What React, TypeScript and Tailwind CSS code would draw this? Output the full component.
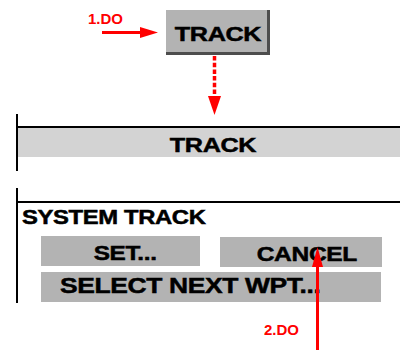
const Label = ({ text, className = '' }: { text: string; className?: string }) => (
  <span
    className={`inline-block text-[21px] leading-none font-bold tracking-[-0.3px] text-black [-webkit-text-stroke:0.5px_black] ${className}`}
  >
    {text}
  </span>
);

const App = () => {
  return (
    <div className="relative h-[350px] w-[400px] overflow-hidden bg-white font-['Liberation_Sans',Arial,sans-serif]">
      {/* top soft key */}
      <div className="pt-[10px] pl-[166px]">
        <div className="flex h-[45px] w-[104px] justify-center border-r-[3px] border-b-[3px] border-[#4d4d4d] bg-[#b3b3b3] pt-[13px] pl-[2px]">
          <Label text="TRACK" className="origin-center scale-x-[1.2]" />
        </div>
      </div>

      {/* page title panel */}
      <div className="mt-[59px] ml-[16px] h-[57px] border-l-2 border-black pt-[12px]">
        <div className="border-t-2 border-black">
          <div className="flex h-[29px] justify-center bg-[#d3d3d3] pt-[6px] pl-[7px]">
            <Label text="TRACK" className="origin-center scale-x-[1.2]" />
          </div>
        </div>
      </div>

      {/* system track panel */}
      <div className="mt-[17px] ml-[16px] h-[115px] border-l-2 border-black pt-[13px]">
        <div className="border-t-2 border-black pt-[4px]">
          <div className="pl-[4px]">
            <span className="inline-block origin-left scale-x-[1.19] text-[20px] leading-none font-bold tracking-[-0.3px] text-black [-webkit-text-stroke:0.5px_black]">
              SYSTEM TRACK
            </span>
          </div>
          <div className="mt-[5px] flex items-start gap-[20px] pl-[23px]">
            <div className="flex h-[30px] w-[159px] justify-center bg-[#b3b3b3] pt-[6px] pl-[10px]">
              <Label text="SET..." className="origin-center scale-x-[1.16]" />
            </div>
            <div className="mt-[1px] flex h-[30px] w-[162px] justify-center bg-[#b3b3b3] pt-[6px] pl-[12px]">
              <Label text="CANCEL" className="origin-center scale-x-[1.17]" />
            </div>
          </div>
          <div className="mt-[5px] ml-[23px] h-[30px] w-[340px] bg-[#b3b3b3] pt-[3px] pl-[19px]">
            <Label text="SELECT NEXT WPT..." className="origin-left scale-x-[1.2] text-[22px]" />
          </div>
        </div>
      </div>

      {/* red annotations */}
      <span className="absolute top-[12px] left-[88px] origin-left scale-x-[1.07] text-[14px] leading-none font-bold text-[#ff0000]">
        1.DO
      </span>
      <span className="absolute top-[323px] left-[264px] origin-left scale-x-[1.07] text-[14px] leading-none font-bold text-[#ff0000]">
        2.DO
      </span>
      <svg className="pointer-events-none absolute top-0 left-0" width="400" height="350" viewBox="0 0 400 350">
        <line x1="102" y1="32.5" x2="142" y2="32.5" stroke="#ff0000" strokeWidth="3" />
        <polygon points="140,27 158,32.5 140,38" fill="#ff0000" />
        <line x1="214.5" y1="56" x2="214.5" y2="98" stroke="#ff0000" strokeWidth="3.5" strokeDasharray="4.5 2.2" />
        <polygon points="208,96 221,96 214.5,115" fill="#ff0000" />
        <line x1="317.5" y1="265" x2="317.5" y2="350" stroke="#ff0000" strokeWidth="3" />
        <polygon points="312,267 323,267 317.5,247" fill="#ff0000" />
      </svg>
    </div>
  );
};

export default App;
